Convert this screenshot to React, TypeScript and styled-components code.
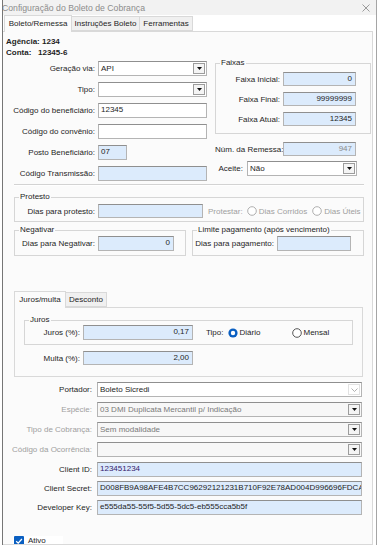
import React from 'react';
import styled, { createGlobalStyle } from 'styled-components';

const GlobalStyle = createGlobalStyle`
  html, body {
    margin: 0;
    padding: 0;
    background: #ffffff;
  }
  body {
    font-family: "Liberation Sans", Arial, sans-serif;
    font-size: 8px;
    color: #1e1e1e;
  }
  * {
    box-sizing: border-box;
  }
`;

const Window = styled.div`
  width: 375px;
  height: 545px;
  margin-left: 2px;
  overflow: hidden;
  border-left: 1px solid #767676;
  border-right: 1px solid #a5a5a5;
  background: #ffffff;
  display: flex;
  flex-direction: column;
`;

const TitleBar = styled.div`
  flex: none;
  height: 15px;
  display: flex;
  align-items: center;
  justify-content: space-between;
  padding: 0 6px 0 0;
  margin-left: -1px;
  font-size: 8.7px;
  color: #8c8c8c;
  background: #f2f2f2;
`;

const CloseIcon = () => (
  <svg width="8" height="8" viewBox="0 0 8 8">
    <path d="M0.5 0.5 L7.5 7.5 M7.5 0.5 L0.5 7.5" stroke="#9a9a9a" strokeWidth="1" />
  </svg>
);

const TabStrip = styled.div<{ $left?: number }>`
  flex: none;
  display: flex;
  align-items: flex-end;
  height: 16px;
  padding-left: ${p => p.$left ?? 0}px;
  position: relative;
  z-index: 1;
`;

const Tab = styled.div<{ $w: number; $active?: boolean }>`
  width: ${p => p.$w}px;
  height: ${p => (p.$active ? 17 : 15)}px;
  margin-bottom: ${p => (p.$active ? -1 : 0)}px;
  border: 1px solid #d9d9d9;
  border-bottom: ${p => (p.$active ? 'none' : '1px solid #d9d9d9')};
  margin-left: ${p => (p.$active ? 0 : -1)}px;
  background: ${p => (p.$active ? '#fbfbfb' : '#f0f0f0')};
  display: flex;
  align-items: center;
  justify-content: center;
  white-space: nowrap;
  padding-bottom: ${p => (p.$active ? 1 : 0)}px;
`;

const TabPage = styled.div`
  flex: 1;
  min-height: 0;
  overflow: hidden;
  margin-right: 3px;
  border: 1px solid #d9d9d9;
  border-left: none;
  background: #fbfbfb;
  display: flex;
  flex-direction: column;
`;

const Header = styled.div`
  flex: none;
  padding: 4px 0 0 3px;
  font-weight: bold;
  line-height: 11px;
`;

const Columns = styled.div`
  flex: none;
  display: flex;
  align-items: flex-start;
  gap: 8px;
`;

const LeftCol = styled.div`
  width: 204px;
  display: flex;
  flex-direction: column;
  gap: 6px;
  padding-top: 3px;
`;

const RightCol = styled.div`
  width: 156px;
  display: flex;
  flex-direction: column;
`;

const Row = styled.div<{ $h?: number; $mt?: number }>`
  flex: none;
  display: flex;
  align-items: center;
  height: ${p => p.$h ?? 15}px;
  margin-top: ${p => p.$mt ?? 0}px;
`;

const Label = styled.div<{ $w: number; $pr?: number; $muted?: boolean }>`
  width: ${p => p.$w}px;
  flex: none;
  text-align: right;
  padding-right: ${p => p.$pr ?? 3}px;
  white-space: nowrap;
  color: ${p => (p.$muted ? '#a0a0a0' : '#1e1e1e')};
`;

const Box = styled.div<{ $w: number; $h?: number; $blue?: boolean; $right?: boolean; $ink?: string; $off?: boolean }>`
  width: ${p => p.$w}px;
  height: ${p => p.$h ?? 15}px;
  flex: none;
  border: 1px solid #b4b4b4;
  border-top-color: #8f8f8f;
  background: ${p => (p.$blue ? '#dcebfc' : p.$off ? '#f7f7f7' : '#ffffff')};
  color: ${p => p.$ink ?? '#1e1e1e'};
  display: flex;
  align-items: center;
  justify-content: ${p => (p.$right ? 'flex-end' : 'flex-start')};
  padding: 0 3px 2px 2px;
  white-space: nowrap;
  overflow: hidden;
`;

const ComboBox = styled.div<{ $w: number; $off?: boolean }>`
  width: ${p => p.$w}px;
  height: 15px;
  flex: none;
  border: 1px solid #b4b4b4;
  border-top-color: #8f8f8f;
  background: ${p => (p.$off ? '#f7f7f7' : '#ffffff')};
  display: flex;
  align-items: stretch;
`;

const ComboText = styled.div<{ $muted?: boolean }>`
  flex: 1;
  display: flex;
  align-items: center;
  padding: 0 0 1px 2px;
  white-space: nowrap;
  overflow: hidden;
  color: ${p => (p.$muted ? '#7a7a7a' : '#1e1e1e')};
`;

const DropButton = styled.div<{ $flat?: boolean }>`
  width: 12px;
  margin: 1px;
  border: 1px solid ${p => (p.$flat ? '#e2e2e2' : '#9c9c9c')};
  background: ${p => (p.$flat ? '#ffffff' : '#f4f4f4')};
  display: flex;
  align-items: center;
  justify-content: center;
`;

const Arrow = () => (
  <svg width="5" height="3" viewBox="0 0 5 3">
    <path d="M0 0 H5 L2.5 3 Z" fill="#111" />
  </svg>
);

const Chevron = () => (
  <svg width="7" height="4" viewBox="0 0 7 4">
    <path d="M0.5 0.5 L3.5 3.5 L6.5 0.5" fill="none" stroke="#a8a8a8" strokeWidth="0.9" />
  </svg>
);

const Combo: React.FC<{ w: number; text?: string; muted?: boolean; flat?: boolean }> = ({ w, text, muted, flat }) => (
  <ComboBox $w={w} $off={muted}>
    <ComboText $muted={muted}>{text}</ComboText>
    <DropButton $flat={flat}>{flat ? <Chevron /> : <Arrow />}</DropButton>
  </ComboBox>
);

const Group = styled.fieldset<{ $w: number; $pt?: number; $pb?: number; $ml?: number; $mt?: number }>`
  flex: none;
  width: ${p => p.$w}px;
  margin: ${p => p.$mt ?? 0}px 0 0 ${p => p.$ml ?? 0}px;
  padding: ${p => p.$pt ?? 0}px 0 ${p => p.$pb ?? 0}px 0;
  border: 1px solid #d6d6d6;
  min-width: 0;
  display: flex;
  flex-direction: column;
`;

const Legend = styled.legend`
  margin-left: 4px;
  padding: 0 1px;
  line-height: 10px;
  font-size: 8px;
  color: #1e1e1e;
`;

const GroupRows = styled.div`
  display: flex;
  flex-direction: column;
  gap: 6px;
`;

const Separator = styled.div`
  flex: none;
  margin: 3px 0 0 11px;
  width: 350px;
  height: 2px;
  border-top: 1px solid #d3d3d3;
  border-bottom: 1px solid #ffffff;
`;

const PairRow = styled.div`
  flex: none;
  display: flex;
  gap: 6px;
  margin: 3px 0 0 11px;
`;

const Muted = styled.span<{ $ml?: number; $plain?: boolean }>`
  color: ${p => (p.$plain ? '#1e1e1e' : '#a0a0a0')};
  margin-left: ${p => p.$ml ?? 0}px;
  white-space: nowrap;
`;

const RadioItem = styled.div<{ $ml?: number; $w?: number }>`
  display: flex;
  align-items: center;
  gap: 2px;
  margin-left: ${p => p.$ml ?? 0}px;
  width: ${p => (p.$w ? `${p.$w}px` : 'auto')};
  white-space: nowrap;
  color: #1e1e1e;
`;

const Radio: React.FC<{ on?: boolean; faint?: boolean }> = ({ on, faint }) => (
  <svg width="10" height="10" viewBox="0 0 10 10">
    {on ? (
      <>
        <circle cx="5" cy="5" r="4.6" fill="#0a5fc1" />
        <circle cx="5" cy="5" r="2.2" fill="#ffffff" />
      </>
    ) : (
      <circle cx="5" cy="5" r="4.3" fill="#ffffff" stroke={faint ? '#a6a6a6' : '#444'} strokeWidth="0.9" />
    )}
  </svg>
);

const InnerTabs = styled.div`
  flex: none;
  margin: 35px 0 0 11px;
  width: 349px;
  display: flex;
  flex-direction: column;
`;

const InnerPanel = styled.div`
  height: 70px;
  border: 1px solid #d9d9d9;
  background: #fbfbfb;
  display: flex;
  flex-direction: column;
`;

const Lower = styled.div`
  flex: none;
  display: flex;
  flex-direction: column;
  gap: 5px;
  margin-top: 5px;
`;

const Secrets = styled.div`
  flex: none;
  display: flex;
  flex-direction: column;
  gap: 4px;
  margin-top: 5px;
`;

const CheckRow = styled.div`
  flex: none;
  margin: 21px 0 0 10px;
  width: 50px;
  height: 12px;
  background: #ffffff;
  display: flex;
  align-items: flex-start;
  gap: 4px;
  padding-left: 1px;
`;

const Check = () => (
  <svg width="10" height="10" viewBox="0 0 10 10">
    <rect x="0" y="0" width="10" height="10" rx="1" fill="#0a5fc1" />
    <path d="M2.2 5.2 L4.2 7.1 L7.9 3" fill="none" stroke="#fff" strokeWidth="1.3" />
  </svg>
);

export default function App() {
  return (
    <>
      <GlobalStyle />
      <Window>
        <TitleBar>
          <span>Configuração do Boleto de Cobrança</span>
          <CloseIcon />
        </TitleBar>
        <TabStrip $left={1}>
          <Tab $w={68} $active>Boleto/Remessa</Tab>
          <Tab $w={69}>Instruções Boleto</Tab>
          <Tab $w={54}>Ferramentas</Tab>
        </TabStrip>
        <TabPage>
          <Header>
            <div>Agência: 1234</div>
            <div>Conta:&nbsp;&nbsp;&nbsp;12345-6</div>
          </Header>

          <Columns>
            <LeftCol>
              <Row><Label $w={95}>Geração via:</Label><Combo w={109} text="API" /></Row>
              <Row><Label $w={95}>Tipo:</Label><Combo w={109} /></Row>
              <Row><Label $w={95}>Código do beneficiário:</Label><Box $w={109}>12345</Box></Row>
              <Row><Label $w={95}>Código do convênio:</Label><Box $w={109} /></Row>
              <Row><Label $w={95}>Posto Beneficiário:</Label><Box $w={29} $blue>07</Box></Row>
              <Row><Label $w={95}>Código Transmissão:</Label><Box $w={109} $blue /></Row>
            </LeftCol>

            <RightCol>
              <Group $w={156} $pt={4} $pb={7}>
                <Legend>Faixas</Legend>
                <GroupRows>
                  <Row $h={14}><Label $w={67}>Faixa Inicial:</Label><Box $w={73} $h={14} $blue $right>0</Box></Row>
                  <Row $h={14}><Label $w={67}>Faixa Final:</Label><Box $w={73} $h={14} $blue $right>99999999</Box></Row>
                  <Row $h={14}><Label $w={67}>Faixa Atual:</Label><Box $w={73} $h={14} $blue $right>12345</Box></Row>
                </GroupRows>
              </Group>
              <Row $h={14} $mt={8}><Label $w={68} $pr={2}>Núm. da Remessa:</Label><Box $w={73} $h={14} $blue $right $ink="#8a8a8a">947</Box></Row>
              <Row $mt={5}><Label $w={32} $pr={4}>Aceite:</Label><Combo w={110} text="Não" /></Row>
            </RightCol>
          </Columns>

          <Separator />

          <Group $w={350} $ml={11} $mt={6} $pt={2} $pb={3}>
            <Legend>Protesto</Legend>
            <Row $h={14}>
              <Label $w={83}>Dias para protesto:</Label>
              <Box $w={105} $h={14} $blue />
              <Muted $ml={5}>Protestar:</Muted>
              <RadioItem $ml={4}><Radio faint /><Muted>Dias Corridos</Muted></RadioItem>
              <RadioItem $ml={5}><Radio faint /><Muted>Dias Úteis</Muted></RadioItem>
            </Row>
          </Group>

          <PairRow>
            <Group $w={172} $pt={1} $pb={4}>
              <Legend>Negativar</Legend>
              <Row><Label $w={83}>Dias para Negativar:</Label><Box $w={76} $blue $right>0</Box></Row>
            </Group>
            <Group $w={172} $pt={1} $pb={4}>
              <Legend>Limite pagamento (após vencimento)</Legend>
              <Row><Label $w={84}>Dias para pagamento:</Label><Box $w={74} $blue /></Row>
            </Group>
          </PairRow>

          <InnerTabs>
            <TabStrip>
              <Tab $w={52} $active>Juros/multa</Tab>
              <Tab $w={42}>Desconto</Tab>
            </TabStrip>
            <InnerPanel>
              <Group $w={329} $ml={9} $mt={7} $pt={0} $pb={4}>
                <Legend>Juros</Legend>
                <Row>
                  <Label $w={58}>Juros (%):</Label>
                  <Box $w={110} $blue $right>0,17</Box>
                  <Muted $ml={13} $plain>Tipo:</Muted>
                  <RadioItem $ml={4} $w={64}><Radio on /><span>Diário</span></RadioItem>
                  <RadioItem><Radio /><span>Mensal</span></RadioItem>
                </Row>
              </Group>
              <Row $h={14} $mt={6}>
                <Label $w={68}>Multa (%):</Label>
                <Box $w={110} $h={14} $blue $right>2,00</Box>
              </Row>
            </InnerPanel>
          </InnerTabs>

          <Lower>
            <Row><Label $w={94} $pr={5}>Portador:</Label><Combo w={265} text="Boleto Sicredi" flat /></Row>
            <Row><Label $w={94} $pr={5} $muted>Espécie:</Label><Combo w={265} text="03 DMI Duplicata Mercantil p/ Indicação" muted /></Row>
            <Row><Label $w={94} $pr={5} $muted>Tipo de Cobrança:</Label><Combo w={265} text="Sem modalidade" muted /></Row>
            <Row><Label $w={94} $pr={5} $muted>Código da Ocorrência:</Label><Combo w={265} muted /></Row>
          </Lower>

          <Secrets>
            <Row><Label $w={94} $pr={5}>Client ID:</Label><Box $w={265} $blue $ink="#35206b">123451234</Box></Row>
            <Row><Label $w={94} $pr={5}>Client Secret:</Label><Box $w={265} $blue>D008FB9A98AFE4B7CC96292121231B710F92E78AD004D996696FDCAE0</Box></Row>
            <Row><Label $w={94} $pr={5}>Developer Key:</Label><Box $w={265} $blue>e555da55-55f5-5d55-5dc5-eb555cca5b5f</Box></Row>
          </Secrets>

          <CheckRow><Check /><span>Ativo</span></CheckRow>
        </TabPage>
      </Window>
    </>
  );
}
